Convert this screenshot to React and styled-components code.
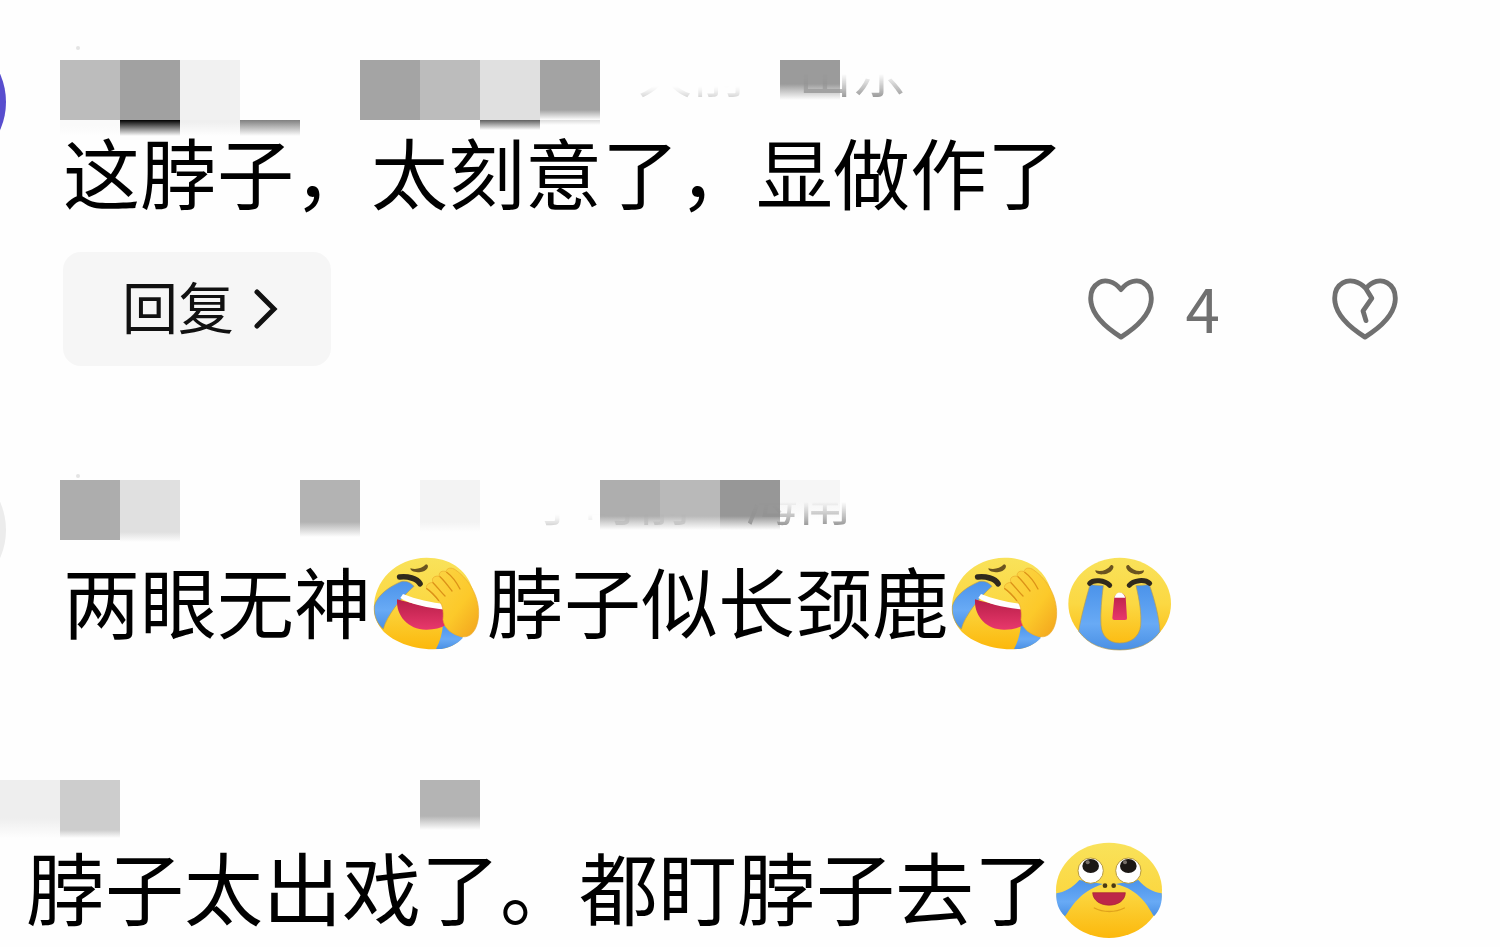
import styled, { createGlobalStyle } from 'styled-components'

const comments = [
  {
    id: 1,
    avatar: '#584dce',
    drop: 0,
    gap: 0,
    size: 77,
    ghost: { start: 578, text: '天前', place: '山东' },
    tiles: [
      ['#bcbcbc', 60, 60],
      ['#a1a1a1', 60, 60],
      ['#f1f1f1', 60, 60],
      null,
      null,
      ['#a4a4a4', 60, 60],
      ['#bcbcbc', 60, 60],
      ['#e0e0e0', 60, 60],
      ['#a3a3a3', 50, 60],
      null,
      null,
      null,
      ['#9b9b9b', 24, 40],
    ],
    under: [
      ['#fafafa', 6, 16],
      ['#000000', 0, 16],
      ['#efefef', 2, 16],
      ['#808080', 0, 16],
      null,
      null,
      null,
      ['#606060', 0, 10],
      ['#dcdcdc', 0, 5],
    ],
    text: ['这脖子，太刻意了，显做作了'],
    likes: 4,
  },
  {
    id: 2,
    avatar: '#ececec',
    drop: 8,
    gap: 25,
    size: 77,
    ghost: { start: 470, text: '小时前', place: '海南' },
    tiles: [
      ['#adadad', 60, 60],
      ['#e0e0e0', 52, 62],
      null,
      null,
      ['#b3b3b3', 42, 57],
      null,
      ['#f3f3f3', 42, 52],
      null,
      null,
      ['#aeaeae', 36, 50],
      ['#b9b9b9', 36, 50],
      ['#979797', 36, 50],
      ['#f6f6f6', 22, 40],
    ],
    text: ['两眼无神', 'facepalm', '脖子似长颈鹿', 'facepalm', 'sob'],
  },
  {
    id: 3,
    gap: 11,
    size: 79,
    tiles: [
      ['#eeeeee', 38, 58],
      ['#cdcdcd', 50, 58],
      null,
      null,
      null,
      null,
      null,
      ['#b4b4b4', 36, 50],
    ],
    text: ['脖子太出戏了。都盯脖子去了', 'touched'],
  },
]

const Gradients = () => (
  <Defs aria-hidden="true">
    <defs>
      <linearGradient id="face" x1="0" y1="0" x2="0" y2="1">
        <stop offset="0" stopColor="#f9e25a" />
        <stop offset="0.5" stopColor="#fbd843" />
        <stop offset="1" stopColor="#fcb80c" />
      </linearGradient>
      <linearGradient id="hand" x1="0" y1="0" x2="1" y2="1">
        <stop offset="0" stopColor="#fbd649" />
        <stop offset="0.6" stopColor="#fcc92a" />
        <stop offset="1" stopColor="#f2a21c" />
      </linearGradient>
      <linearGradient id="tear" x1="0" y1="0" x2="0" y2="1">
        <stop offset="0" stopColor="#4b93ea" />
        <stop offset="0.6" stopColor="#68aaf5" />
        <stop offset="1" stopColor="#4a90e4" />
      </linearGradient>
      <linearGradient id="mouth" x1="0" y1="0" x2="0" y2="1">
        <stop offset="0" stopColor="#b81f48" />
        <stop offset="1" stopColor="#e8386c" />
      </linearGradient>
    </defs>
  </Defs>
)

const Facepalm = () => (
  <Emoji viewBox="42 36 324 282" $h={94} role="img" aria-label="捂脸">
    <path
      d="M45 190C44 110 108 39 203 38C270 38 322 72 340 130C360 200 330 290 262 309C185 324 85 292 57 236C49 220 45 208 45 190Z"
      fill="url(#face)"
    />
    <path
      d="M126 110C92 124 55 150 46 183C44 212 54 236 73 252C83 213 126 158 165 124C155 112 140 106 126 110Z"
      fill="url(#tear)"
      stroke="#b29c55"
      strokeWidth="2"
    />
    <path d="M252 238C250 266 243 290 231 312C262 314 292 300 312 278C290 270 270 258 252 238Z" fill="url(#tear)" />
    <path
      d="M114 163C111 213 148 255 203 254C226 254 246 249 261 240L262 190C212 187 158 176 114 163Z"
      fill="url(#mouth)"
    />
    <path d="M132 147C172 163 216 173 262 178L260 194C209 189 152 178 124 159Z" fill="#fff" />
    <path
      d="M122 96C146 93 174 100 183 116"
      fill="none"
      stroke="#30291c"
      strokeWidth="17"
      strokeLinecap="round"
    />
    <path d="M154 70C172 75 189 70 201 58C214 60 205 81 181 82C169 82 155 80 154 70Z" fill="#6b5420" />
    <path
      d="M203 131C199 121 209 113 222 112C216 99 227 91 241 94C238 80 251 76 261 80C263 68 278 66 290 75C334 106 365 162 358 220C353 257 335 279 309 275C281 270 256 252 252 224C255 197 250 175 237 165Z"
      fill="url(#hand)"
      stroke="#eaa92a"
      strokeWidth="2"
    />
    <path
      d="M222 113C236 127 245 141 258 153M243 95C256 107 267 122 279 138M263 82C278 93 293 113 303 132M203 131C215 139 229 153 239 167"
      fill="none"
      stroke="#dc9218"
      strokeWidth="4"
      strokeLinecap="round"
    />
  </Emoji>
)

const Sob = () => (
  <Emoji viewBox="383 36 318 282" $h={94} role="img" aria-label="大哭">
    <ellipse cx="541" cy="176" rx="154" ry="138" fill="url(#face)" />
    <path
      d="M452 119C440 160 424 220 418 259C448 300 492 315 541 315C590 315 636 298 662 260C660 218 645 160 630 119L590 122C600 165 607 205 604 242C600 276 574 294 541 294C509 294 487 274 485 240C483 205 487 160 492 122Z"
      fill="url(#tear)"
      stroke="#b29c55"
      strokeWidth="2"
    />
    <path
      d="M451 115C462 103 496 105 511 121M570 121C582 105 617 102 631 115"
      fill="none"
      stroke="#30291c"
      strokeWidth="15"
      strokeLinecap="round"
    />
    <path
      d="M468 76C485 82 503 76 515 60C532 60 518 88 490 88C478 89 468 85 468 76ZM614 76C597 82 580 76 568 60C551 60 565 87 593 88C605 89 614 85 614 76Z"
      fill="#6b5420"
    />
    <path d="M525 157C533 139 551 139 559 157L563 219Q564 225 557 225L525 225Q519 225 519 219Z" fill="url(#mouth)" />
    <path d="M525 158C531 137 551 137 558 158Z" fill="#fff" />
  </Emoji>
)

const Touched = () => (
  <Emoji viewBox="40 36 324 291" $h={97} role="img" aria-label="感动">
    <ellipse cx="202" cy="181" rx="159" ry="143" fill="url(#face)" />
    <path
      d="M113 150C93 174 66 187 44 190C42 216 51 242 70 259C92 229 112 186 184 162ZM290 150C310 174 336 187 360 190C363 216 354 242 337 259C318 229 296 180 222 162Z"
      fill="url(#tear)"
    />
    <circle cx="147" cy="122" r="38" fill="#fff" stroke="#b99b3c" strokeWidth="3" />
    <circle cx="260" cy="122" r="38" fill="#fff" stroke="#b99b3c" strokeWidth="3" />
    <ellipse cx="147" cy="108" rx="25" ry="21" fill="#1c1815" />
    <ellipse cx="260" cy="108" rx="25" ry="21" fill="#1c1815" />
    <circle cx="138" cy="97" r="6" fill="#77706a" />
    <circle cx="250" cy="97" r="6" fill="#77706a" />
    <circle cx="190" cy="167" r="7" fill="#4a3a14" />
    <circle cx="216" cy="167" r="7" fill="#4a3a14" />
    <path d="M158 234C184 248 222 248 248 234" fill="none" stroke="#e0a21c" strokeWidth="4" strokeLinecap="round" />
    <path d="M153 188H251C250 238 155 238 153 188Z" fill="#bd2848" stroke="#a32035" strokeWidth="2" />
  </Emoji>
)

const emojis = { facepalm: Facepalm, sob: Sob, touched: Touched }

const Tiles = ({ items }) => (
  <TileRow>
    {items.map((tile, i) =>
      tile ? (
        <Tile key={i} $tint={tile[0]} $solid={tile[1]} $fade={tile[2]} />
      ) : (
        <Tile key={i} />
      )
    )}
  </TileRow>
)

const Comment = ({ comment }) => {
  const { avatar, drop, tiles, under, ghost, gap, size, text, likes } = comment
  return (
    <Item>
      {avatar && <Avatar $color={avatar} $drop={drop} />}
      <Body>
        <Meta $speck={Boolean(avatar)} $drop={drop}>
          <Tiles items={tiles} />
          {ghost && (
            <Ghost $start={ghost.start} $drop={drop}>
              <span>{ghost.text}</span>
              <span>{ghost.place}</span>
            </Ghost>
          )}
        </Meta>
        {under && (
          <Under>
            <Tiles items={under} />
          </Under>
        )}
        <Text $gap={gap} $size={size} $inset={avatar ? 3 : 26}>
          {text.map((part, i) => {
            const Face = emojis[part]
            return Face ? <Face key={i} /> : <span key={i}>{part}</span>
          })}
        </Text>
        {likes && (
          <Footer>
            <Reply type="button">
              <span>回复</span>
              <svg width="24" height="40" viewBox="0 0 24 40" aria-hidden="true">
                <path d="M3 3L20 20L3 37" fill="none" stroke="#111" strokeWidth="5" strokeLinecap="round" />
              </svg>
            </Reply>
            <Actions>
              <Action type="button" aria-label="赞">
                <Heart viewBox="0 0 68 64">
                  <path d="M34 12C27 3 17 1 11 5C4 9 2 17 3 25C5 38 18 51 34 61C50 51 63 38 65 25C66 17 64 9 57 5C51 1 41 3 34 12Z" />
                </Heart>
                <span>{likes}</span>
              </Action>
              <Action type="button" aria-label="踩">
                <Heart viewBox="0 0 68 64">
                  <path d="M35 11C28 3 18 1 11 5C4 9 2 17 3 25C5 38 18 51 34 61C50 51 63 38 65 25C66 17 64 9 57 5C50 1 41 3 35 11L41 21L32 34L35 44" />
                </Heart>
              </Action>
            </Actions>
          </Footer>
        )}
      </Body>
    </Item>
  )
}

const App = () => {
  return (
    <>
      <GlobalStyle />
      <Gradients />
      <Thread>
        {comments.map((comment) => (
          <Comment key={comment.id} comment={comment} />
        ))}
      </Thread>
    </>
  )
}

export default App

const GlobalStyle = createGlobalStyle`
  * {
    box-sizing: border-box;
  }
  body {
    margin: 0;
    background: #fefefe;
    color: #000;
    font-family: 'Noto Sans CJK SC', sans-serif;
  }
`

const Defs = styled.svg`
  position: absolute;
  width: 0;
  height: 0;
`

const Thread = styled.main`
  display: flex;
  flex-direction: column;
  padding: 60px 0 16px;
  overflow-x: clip;
`

const Item = styled.article`
  display: flex;
  align-items: flex-start;

  & + & {
    margin-top: 114px;
  }
  & + & + & {
    margin-top: 137px;
  }
`

const Avatar = styled.div`
  flex: none;
  width: 138px;
  height: 138px;
  margin: ${(props) => props.$drop - 27}px 54px -80px -132px;
  border-radius: 50%;
  background: ${(props) => props.$color};
`

const Body = styled.div`
  flex: 1;
  min-width: 0;
`

const Meta = styled.div`
  position: relative;
  display: grid;
  height: 60px;

  > * {
    grid-area: 1 / 1;
  }
  &::before {
    content: '';
    display: ${(props) => (props.$speck ? 'block' : 'none')};
    position: absolute;
    top: ${(props) => props.$drop - 14}px;
    left: 16px;
    width: 4px;
    height: 4px;
    border-radius: 50%;
    background: #e4e4e4;
  }
`

const TileRow = styled.div`
  display: flex;
`

const Tile = styled.span`
  flex: none;
  width: 60px;
  background: ${(props) =>
    props.$tint
      ? `linear-gradient(${props.$tint} ${props.$solid}px, transparent ${props.$fade}px)`
      : 'none'};
`

const Under = styled.div`
  display: grid;
  height: 16px;
`

/* what is left of the date and place below the tiles */
const Ghost = styled.div`
  display: flex;
  gap: 52px;
  padding-left: ${(props) => props.$start}px;
  height: 60px;
  margin-top: ${(props) => props.$drop}px;
  color: #8f8f8f;
  font-size: 54px;
  line-height: 20px;
  white-space: nowrap;
  mask-image: linear-gradient(transparent 14px, #000 40px);

  span:first-child {
    opacity: 0.5;
    mask-image: linear-gradient(transparent 26px, #000 40px);
  }
`

const Text = styled.p`
  display: flex;
  align-items: center;
  margin: ${(props) => props.$gap}px 0 0;
  padding-left: ${(props) => props.$inset}px;
  height: 78px;
  font-size: ${(props) => props.$size}px;
  line-height: 70px;
  white-space: nowrap;

  span {
    padding-bottom: 8px;
  }
`

const Emoji = styled.svg`
  flex: none;
  height: ${(props) => props.$h}px;
  margin: 0 6px 0 2px;
`

const Footer = styled.footer`
  display: flex;
  align-items: center;
  justify-content: space-between;
  margin-top: 38px;
  padding: 0 102px 0 3px;
`

const Reply = styled.button`
  display: flex;
  align-items: center;
  justify-content: center;
  gap: 20px;
  width: 268px;
  height: 114px;
  padding: 0 0 0 6px;
  border: 0;
  border-radius: 18px;
  background: #f6f6f6;
  color: #111;
  font-family: inherit;
  font-size: 56px;
  line-height: 64px;

  span {
    padding-bottom: 8px;
  }
`

const Actions = styled.div`
  display: flex;
  align-items: center;
  gap: 112px;
`

const Action = styled.button`
  display: flex;
  align-items: center;
  gap: 32px;
  padding: 0;
  border: 0;
  background: none;
  color: #707070;
  font-family: inherit;
  font-size: 62px;
  line-height: 64px;

  span {
    padding-bottom: 6px;
  }
`

const Heart = styled.svg`
  width: 66px;
  height: 62px;
  fill: none;
  stroke: #707070;
  stroke-width: 5;
  stroke-linecap: round;
  stroke-linejoin: round;
`
